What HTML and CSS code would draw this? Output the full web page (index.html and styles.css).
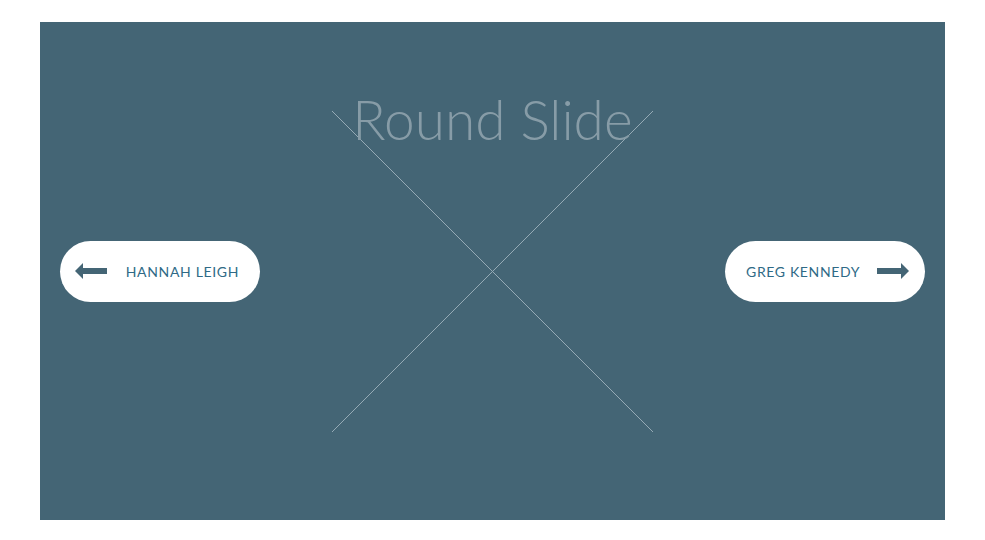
FILE: index.html
```html
<!DOCTYPE html>
<html lang="en">
<head>
<meta charset="utf-8">
<title>Round Slide</title>
<link rel="stylesheet" href="styles.css">
</head>
<body>
<div class="page">
  <section class="slide">
    <svg class="placeholder" viewBox="0 0 321 321" width="321" height="321" aria-hidden="true">
      <line x1="0" y1="0" x2="321" y2="321"/>
      <line x1="321" y1="0" x2="0" y2="321"/>
    </svg>
    <h1 class="title">Round Slide</h1>
    <nav class="nav">
      <a class="pill pill-prev" href="#">
        <svg class="arrow" viewBox="0 0 32 16" width="32" height="16" aria-hidden="true">
          <path d="M0 8 L8 0 L8 5 L32 5 L32 11 L8 11 L8 16 Z"/>
        </svg>
        <span class="pill-label">HANNAH LEIGH</span>
      </a>
      <a class="pill pill-next" href="#">
        <span class="pill-label">GREG KENNEDY</span>
        <svg class="arrow" viewBox="0 0 32 16" width="32" height="16" aria-hidden="true">
          <path d="M32 8 L24 0 L24 5 L0 5 L0 11 L24 11 L24 16 Z"/>
        </svg>
      </a>
    </nav>
  </section>
</div>
</body>
</html>
```
FILE: styles.css
```css
html, body {
  margin: 0;
  padding: 0;
  background: #ffffff;
}

.page {
  padding: 22px 40px 20px 40px;
}

.slide {
  display: grid;
  grid-template-columns: 1fr;
  grid-template-rows: 498px;
  background: #446575;
  font-family: Lato, "Open Sans", sans-serif;
}

.slide > * {
  grid-column: 1;
  grid-row: 1;
}

.placeholder {
  align-self: center;
  justify-self: center;
  margin-top: 1px;
}

.placeholder line {
  stroke: #95aab5;
  stroke-width: 1;
}

.title {
  align-self: start;
  justify-self: center;
  margin: 64px 0 0 0;
  font-family: Lato, sans-serif;
  font-weight: 300;
  font-size: 55px;
  line-height: 66px;
  color: #879ca7;
  letter-spacing: 0;
}

.nav {
  align-self: center;
  display: flex;
  justify-content: space-between;
  padding: 0 20px;
}

.pill {
  width: 200px;
  height: 61px;
  box-sizing: border-box;
  display: flex;
  align-items: center;
  justify-content: space-between;
  background: #ffffff;
  border-radius: 31px;
  text-decoration: none;
}

.pill-prev {
  padding: 0 21px 0 15px;
}

.pill-next {
  padding: 0 16px 0 21px;
}

.pill-label {
  font-family: Lato, sans-serif;
  font-size: 14px;
  letter-spacing: 0.65px;
  color: #2f6a86;
}

.arrow {
  display: block;
  fill: #446575;
}
```
